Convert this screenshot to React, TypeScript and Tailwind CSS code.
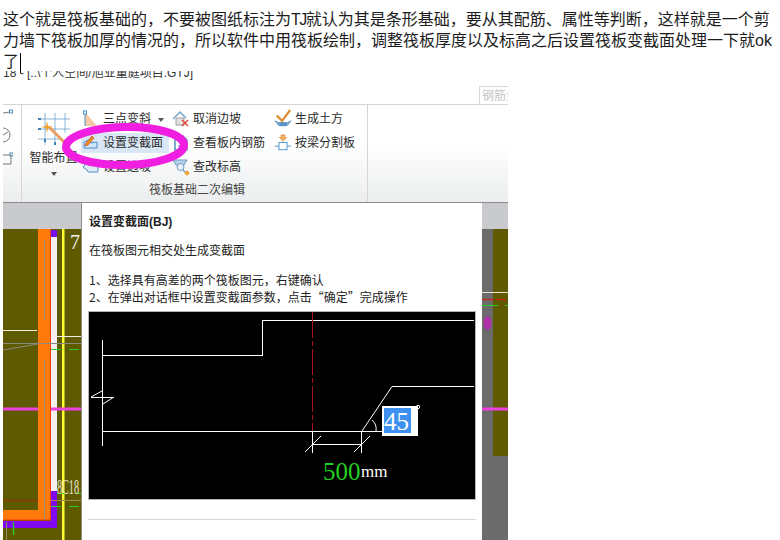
import type { ReactNode } from "react";

const cjk = "font-['Liberation_Sans','Noto_Sans_CJK_SC',sans-serif]";

function CutIcon() {
	return (
		<svg width="18" height="18" viewBox="0 0 18 18" fill="none">
			<path d="M2 14V8l7-3v4l6-1v6z" fill="#d4e6f6" stroke="#4a8fc8" />
			<path d="M4 9l6-7 2 2-6 7-3 1z" fill="#f08a24" stroke="#c9501a" strokeWidth="0.7" />
		</svg>
	);
}

function SlopeIcon() {
	return (
		<svg width="18" height="18" viewBox="0 0 18 18" fill="none">
			<path d="M3 2v14h12z" fill="#f6c9a4" />
			<path d="M3 2v14" stroke="#4a8fc8" />
			<rect x="1.5" y="1" width="3" height="3" fill="#fff" stroke="#4a8fc8" />
		</svg>
	);
}

function EdgeIcon() {
	return (
		<svg width="18" height="18" viewBox="0 0 18 18" fill="none">
			<path d="M1 9l5-5v3h10v7H6v-1z" fill="#dfeaf5" stroke="#4a8fc8" />
		</svg>
	);
}

function CancelIcon() {
	return (
		<svg width="18" height="18" viewBox="0 0 18 18" fill="none">
			<path d="M1 9l7-7 6 6" stroke="#7aa6c8" strokeWidth="1.5" />
			<path d="M4 8h8v7H4z" fill="#e4e4e4" stroke="#9a9a9a" />
			<path d="M10 10l6 6M16 10l-6 6" stroke="#e0483c" strokeWidth="1.5" />
		</svg>
	);
}

function RebarIcon() {
	return (
		<svg width="18" height="18" viewBox="0 0 18 18" fill="none">
			<path d="M3 2h8l4 4v10H3z" fill="#fff" stroke="#3f7fb5" strokeWidth="1.3" />
			<path d="M6 12h6" stroke="#3f7fb5" />
		</svg>
	);
}

function LevelIcon() {
	return (
		<svg width="18" height="18" viewBox="0 0 18 18" fill="none">
			<path d="M1 2h14l-3 5H4z" fill="#b8d3ea" stroke="#6d9cc2" />
			<circle cx="8.5" cy="9" r="3.5" fill="#e8f1f8" stroke="#6d9cc2" />
			<path d="M11 12l2 2" stroke="#6d9cc2" strokeWidth="1.5" />
			<rect x="13" y="13" width="4" height="4" fill="#f0a030" transform="rotate(45 15 15)" />
		</svg>
	);
}

function EarthIcon() {
	return (
		<svg width="20" height="22" viewBox="0 0 20 22" fill="none">
			<path d="M3 7l6 6 9-12" stroke="#e08a30" strokeWidth="2.4" />
			<path d="M1 13l4 5h10l4-5-4 2H5z" fill="#7fb0d8" stroke="#3f7fb5" strokeWidth="0.7" />
			<rect x="6" y="15" width="8" height="4" fill="#5d93c4" />
		</svg>
	);
}

function SplitIcon() {
	return (
		<svg width="20" height="20" viewBox="0 0 20 20" fill="none">
			<path d="M8 1h4v3h2l-4 4-4-4h2z" fill="#f2b36a" stroke="#d87a20" strokeWidth="0.7" />
			<rect x="5.5" y="9.5" width="9" height="8" fill="#fff" stroke="#3f8fc8" />
			<path d="M1 13.5h4M15 13.5h4" stroke="#3f8fc8" />
		</svg>
	);
}

function WandIcon() {
	return (
		<svg width="34" height="34" viewBox="0 0 34 34" fill="none">
			<path d="M1 6h32M1 16h32M1 26h24M8 0v32M18 0v32M28 0v20" stroke="#6fa3d0" strokeWidth="0.8" />
			<path d="M1 6h3M1 16h3M8 26v3M18 29v3" stroke="#3f7fb5" strokeWidth="2" />
			<path d="M12 14l20 20" stroke="#e8a060" strokeWidth="3" />
			<path d="M10 8l1 5 5 1-5 1-1 5-1-5-5-1 5-1z" fill="#f2a020" />
		</svg>
	);
}

function RibbonItem({
	icon,
	children,
	active,
	width,
}: {
	icon: ReactNode;
	children: ReactNode;
	active?: boolean;
	width: string;
}) {
	return (
		<div className={`flex h-6 items-center ${width}`}>
			<div
				className={`flex h-5 w-full items-center gap-[3px] pl-[1px] ${active ? "bg-[#d9e6f4]" : ""}`}
			>
				<span className="flex w-[18px] shrink-0 justify-center">{icon}</span>
				<span>{children}</span>
			</div>
		</div>
	);
}

function LeftCanvas() {
	return (
		<svg width="78" height="311" viewBox="3 229 78 311" className="block">
			<rect x="3" y="229" width="78" height="311" fill="#5f5a00" />
			<path d="M38 229h12v291H3v-10h35z" fill="#ff7a0a" />
			<path d="M50.5 229v291H3" stroke="#f03a10" fill="none" />
			<rect x="51" y="230" width="6" height="7" fill="#7a10f0" />
			<rect x="51" y="237" width="6" height="254" fill="#f4f0f4" />
			<path d="M51 491h6v37H3v-7h48z" fill="#8008f0" />
			<rect x="62" y="229" width="2.5" height="311" fill="#ffff30" />
			<path d="M3 330.5h34M57 336.5h24" stroke="#f0f0e0" />
			<path d="M3 343.5h78M3 350l35-6" stroke="#8a8a80" />
			<path d="M44.5 240v80M44.5 360v130M44.5 490v30M6.5 522v18" stroke="#8f8f70" />
			<path d="M51 349.5h10M69 349.5h12M57 493.5h24M51 506.5h30" stroke="#28d028" strokeDasharray="10 8" />
			<path d="M13.5 522v13" stroke="#28d028" strokeWidth="1.4" />
			<path d="M3 500.5h35" stroke="#8a3a08" strokeWidth="1.5" />
			<path d="M50 500.5h31" stroke="#a08a50" />
			<path d="M3 409h35M51 409h30" stroke="#f040e0" strokeWidth="3" />
			<text x="70" y="249" fill="#f4f4f0" fontSize="20" fontFamily="'Liberation Serif',serif">
				7
			</text>
			<text x="57" y="494" fill="#ece6c8" fontSize="20" fontFamily="'Liberation Serif',serif" textLength="22" lengthAdjust="spacingAndGlyphs">
				8C18
			</text>
		</svg>
	);
}

function RightCanvas() {
	return (
		<svg width="26" height="311" viewBox="482 229 26 311" className="block">
			<rect x="482" y="229" width="26" height="311" fill="#6b6b6b" />
			<rect x="493" y="229" width="15" height="227" fill="#5f5a00" />
			<path d="M482 292.5h26" stroke="#e8e4d0" />
			<path d="M482 299.5h24" stroke="#c02818" strokeDasharray="12 2" strokeWidth="1.4" />
			<path d="M482 305.5h16M505 305.5h3" stroke="#28d028" />
			<ellipse cx="487.5" cy="323" rx="4" ry="7" fill="#b030a8" />
			<path d="M482 409h26" stroke="#f040e0" strokeWidth="3" />
		</svg>
	);
}

function SectionDrawing() {
	return (
		<svg width="388" height="189" viewBox="88 312 388 189" className="block">
			<rect x="88.5" y="312.5" width="387" height="188" fill="#000" stroke="#b4b4b4" />
			<g stroke="#fff" fill="none" shapeRendering="crispEdges">
				<path d="M102.5 341v106M103 356.5h159.500v-35H474" />
				<path d="M103 432.500h279" />
				<path d="M91 398.500h23" />
			</g>
			<g stroke="#fff" fill="none">
				<path d="M91 398l11-6M114 398l-11 7" />
				<path d="M362 432l30-44.500h82" />
				<path d="M372 421a12 12 0 0 1 4 11" />
				<path d="M312.500 432v22M361.500 432v22M312 445.500h50M305 453l16-16M354 453l16-16" />
				<circle cx="418" cy="408" r="1.700" />
			</g>
			<path d="M312.500 313v119" stroke="#a81420" strokeDasharray="26 3 5 3" />
			<rect x="382" y="407" width="36" height="30" fill="#fff" />
			<rect x="384" y="409" width="27" height="25" fill="#3d90f0" />
			<text x="384" y="431" fill="#fff" fontSize="25" fontFamily="'Liberation Serif',serif">
				45
			</text>
			<text x="323" y="481" fill="#22d022" fontSize="25" fontFamily="'Liberation Serif',serif">
				500
			</text>
			<text x="361" y="478" fill="#fff" fontSize="17" fontFamily="'Liberation Serif',serif">
				mm
			</text>
		</svg>
	);
}

export default function App() {
	return (
		<div className={`h-[540px] w-[780px] overflow-hidden bg-white text-black ${cjk}`}>
			<div className="h-[71px] pl-[3px] pr-1 pt-[9px] text-[16px] leading-[21px] text-[#1c1c1c]">
				这个就是筏板基础的，不要被图纸标注为<span className="tracking-[-1.5px]">TJ</span>就认为其是条形基础，要从其配筋、属性等判断，这样就是一个剪力墙下筏板加厚的情况的，所以软件中用筏板绘制，调整筏板厚度以及标高之后设置筏板变截面处理一下就ok了
				<span className="ml-[1px] inline-block h-[20px] w-px bg-black align-middle" />
			</div>

			<div className="ml-[3px] w-[505px]">
				<div className="flex h-[34px] items-start justify-between border-b border-[#d4d4d4]">
					<div className="h-[9px] overflow-hidden">
						<div className="-mt-[5px] whitespace-nowrap text-[12px] leading-[14px] text-[#333]">
							18 - [..\个人空间/旭业童庭项目.GTJ]
						</div>
					</div>
					<div className="mt-[15px] h-[18px] w-[29px] overflow-hidden border border-b-0 border-r-0 border-[#d8d8d8] pl-[2px] text-[12px] leading-[18px] text-[#c4c4c4]">
						<div className="w-[40px]">钢筋量</div>
					</div>
				</div>

				<div className="relative flex h-[98px] border-b border-[#8c8c8c] bg-gradient-to-b from-white from-40% to-[#ebedee] text-[12px] text-[#2a2a2a]">
					<div className="flex w-[19px] flex-col items-start gap-[8px] border-r border-[#d6d6d6] pt-[3px]">
						<svg width="10" height="10" viewBox="0 0 10 10" fill="none">
							<path d="M0 5l7-1" stroke="#777" />
							<rect x="6.500" y="2" width="3" height="3" stroke="#5a8fb8" />
						</svg>
						<svg width="9" height="18" viewBox="0 0 9 18" fill="none">
							<path d="M0 2a7 7 0 0 1 0 14M0 9l5-3" stroke="#777" />
						</svg>
						<svg width="10" height="14" viewBox="0 0 10 14" fill="none">
							<path d="M0 3h8v9H0" stroke="#777" />
							<rect x="7" y="1" width="3" height="3" stroke="#5a8fb8" />
						</svg>
					</div>

					<div className="flex w-[346px] flex-col border-r border-[#d6d6d6]">
						<div className="flex pt-[2px]">
							<div className="flex w-[59px] flex-col items-center pl-[4px] pt-[6px]">
								<WandIcon />
								<span className="mt-[2px] whitespace-nowrap">智能布置</span>
								<span className="mt-[5px] h-0 w-0 border-x-[3px] border-t-[4px] border-x-transparent border-t-[#555]" />
							</div>
							<div className="flex w-[90px] flex-col">
								<RibbonItem icon={<SlopeIcon />} width="w-[88px]">
									三点变斜
								</RibbonItem>
								<RibbonItem icon={<CutIcon />} active width="w-[88px]">
									设置变截面
								</RibbonItem>
								<RibbonItem icon={<EdgeIcon />} width="w-[88px]">
									设置边坡
								</RibbonItem>
							</div>
							<div className="flex w-[102px] flex-col">
								<RibbonItem icon={<CancelIcon />} width="w-[100px]">
									取消边坡
								</RibbonItem>
								<RibbonItem icon={<RebarIcon />} width="w-[100px]">
									查看板内钢筋
								</RibbonItem>
								<RibbonItem icon={<LevelIcon />} width="w-[100px]">
									查改标高
								</RibbonItem>
							</div>
							<div className="flex flex-col">
								<RibbonItem icon={<EarthIcon />} width="w-[90px]">
									生成土方
								</RibbonItem>
								<RibbonItem icon={<SplitIcon />} width="w-[90px]">
									按梁分割板
								</RibbonItem>
							</div>
						</div>
						<div className="mt-[2px] pl-[5px] text-center leading-[18px] text-[#444]">筏板基础二次编辑</div>
					</div>

					<span className="absolute left-[155px] top-[13px] h-0 w-0 border-x-[3px] border-t-[4px] border-x-transparent border-t-[#555]" />
					<svg width="140" height="56" viewBox="0 0 140 56" className="absolute left-[53px] top-[14px]" fill="none">
						<ellipse cx="69" cy="27" rx="59" ry="19" stroke="#f01ee0" strokeWidth="8" transform="rotate(-1 69 27)" />
					</svg>
				</div>

				<div className="flex h-[337px]">
					<div className="w-[78px]">
						<div className="h-[26px] bg-[#c9cacd]" />
						<LeftCanvas />
					</div>
					<div className="w-[401px] border-l border-[#8c8c8c] bg-white pl-[6px] text-[12px] text-[#222]">
						<div className="pl-px pt-[10px] font-bold leading-[18px]">设置变截面(BJ)</div>
						<div className="mt-[11px] pl-px leading-[18px]">在筏板图元相交处生成变截面</div>
						<div className="mt-[11px] pl-px font-['Noto_Sans_CJK_SC',sans-serif] leading-[17px]">
							<div>1、选择具有高差的两个筏板图元，右键确认</div>
							<div>2、在弹出对话框中设置变截面参数，点击“确定”完成操作</div>
						</div>
						<div className="mt-[6px]">
							<SectionDrawing />
						</div>
						<div className="mt-[19px] w-[388px] border-t border-[#d8d8d8]" />
					</div>
					<div className="w-[26px]">
						<div className="h-[26px] bg-[#c9cacd]" />
						<RightCanvas />
					</div>
				</div>
			</div>
		</div>
	);
}
